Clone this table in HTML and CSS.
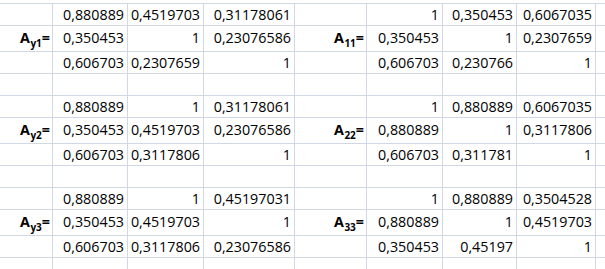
FILE: index.html
```html
<!DOCTYPE html>
<html>
<head>
<meta charset="utf-8">
<link rel="stylesheet" href="styles.css">
</head>
<body>
<div class="sheet">
  <div class="row r">
    <div class="c"></div><div class="c">0,880889</div><div class="c">0,4519703</div><div class="c">0,31178061</div><div class="c"></div><div class="c">1</div><div class="c">0,350453</div><div class="c">0,6067035</div><div class="c"></div>
  </div>
  <div class="row lr">
    <div class="c lab">A<sub>y1</sub>=</div><div class="c">0,350453</div><div class="c">1</div><div class="c">0,23076586</div><div class="c lab">A<sub>11</sub>=</div><div class="c">0,350453</div><div class="c">1</div><div class="c">0,2307659</div><div class="c"></div>
  </div>
  <div class="row r">
    <div class="c"></div><div class="c">0,606703</div><div class="c">0,2307659</div><div class="c">1</div><div class="c"></div><div class="c">0,606703</div><div class="c">0,230766</div><div class="c">1</div><div class="c"></div>
  </div>
  <div class="row r">
    <div class="c"></div><div class="c"></div><div class="c"></div><div class="c"></div><div class="c"></div><div class="c"></div><div class="c"></div><div class="c"></div><div class="c"></div>
  </div>

  <div class="row r">
    <div class="c"></div><div class="c">0,880889</div><div class="c">1</div><div class="c">0,31178061</div><div class="c"></div><div class="c">1</div><div class="c">0,880889</div><div class="c">0,6067035</div><div class="c"></div>
  </div>
  <div class="row lr">
    <div class="c lab">A<sub>y2</sub>=</div><div class="c">0,350453</div><div class="c">0,4519703</div><div class="c">0,23076586</div><div class="c lab">A<sub>22</sub>=</div><div class="c">0,880889</div><div class="c">1</div><div class="c">0,3117806</div><div class="c"></div>
  </div>
  <div class="row r">
    <div class="c"></div><div class="c">0,606703</div><div class="c">0,3117806</div><div class="c">1</div><div class="c"></div><div class="c">0,606703</div><div class="c">0,311781</div><div class="c">1</div><div class="c"></div>
  </div>
  <div class="row r">
    <div class="c"></div><div class="c"></div><div class="c"></div><div class="c"></div><div class="c"></div><div class="c"></div><div class="c"></div><div class="c"></div><div class="c"></div>
  </div>

  <div class="row r">
    <div class="c"></div><div class="c">0,880889</div><div class="c">1</div><div class="c">0,45197031</div><div class="c"></div><div class="c">1</div><div class="c">0,880889</div><div class="c">0,3504528</div><div class="c"></div>
  </div>
  <div class="row lr">
    <div class="c lab">A<sub>y3</sub>=</div><div class="c">0,350453</div><div class="c">0,4519703</div><div class="c">1</div><div class="c lab">A<sub>33</sub>=</div><div class="c">0,880889</div><div class="c">1</div><div class="c">0,4519703</div><div class="c"></div>
  </div>
  <div class="row r">
    <div class="c"></div><div class="c">0,606703</div><div class="c">0,3117806</div><div class="c">0,23076586</div><div class="c"></div><div class="c">0,350453</div><div class="c">0,45197</div><div class="c">1</div><div class="c"></div>
  </div>
  <div class="row r">
    <div class="c"></div><div class="c"></div><div class="c"></div><div class="c"></div><div class="c"></div><div class="c"></div><div class="c"></div><div class="c"></div><div class="c"></div>
  </div>
</div>
</body>
</html>
```

FILE: styles.css
```css
html, body {
  margin: 0;
  padding: 0;
  background: #ffffff;
  overflow: hidden;
}
body {
  font-family: "Open Sans", "Liberation Sans", sans-serif;
  font-size: 14.3px;
  color: #000;
}
.sheet {
  margin-top: 3px;
  border-top: 1px solid #d0d7e5;
  width: 605px;
}
.row {
  display: grid;
  grid-template-columns: 53px 75px 76px 91px 72px 76px 74px 79px 1fr;
}
.row.r { height: 22px; }
.row.lr { height: 26px; }
.c {
  box-sizing: border-box;
  border-right: 1px solid #d0d7e5;
  border-bottom: 1px solid #d0d7e5;
  display: flex;
  justify-content: flex-end;
  align-items: flex-end;
  padding: 0 3px 3px 0;
  line-height: 15px;
  white-space: nowrap;
}
.lr .c { padding-bottom: 6px; }
.c:last-child { border-right: none; }
.lab {
  font-weight: 700;
  padding-right: 2px;
}
.lab sub {
  font-size: 10px;
  line-height: 10px;
  position: relative;
  top: 3px;
  vertical-align: baseline;
  margin-left: 0.5px;
}
```
